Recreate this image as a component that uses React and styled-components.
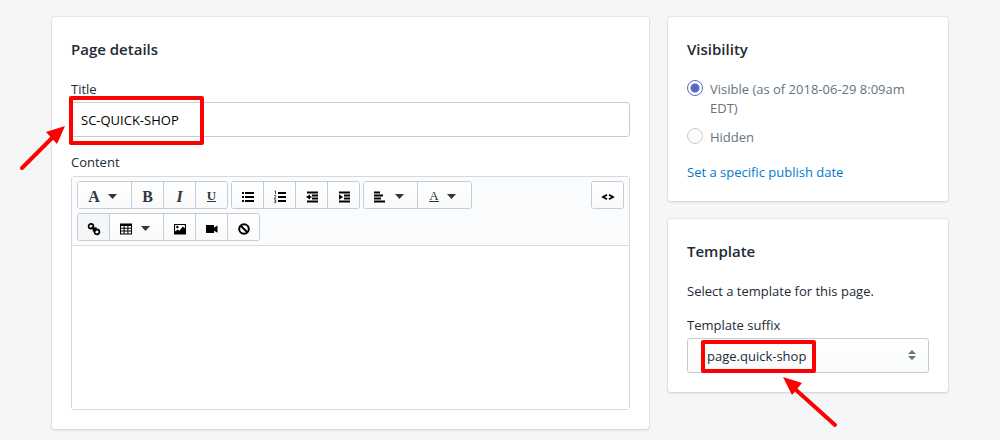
import React, { useState } from 'react';
import styled, { createGlobalStyle } from 'styled-components';

const GlobalStyle = createGlobalStyle`
  *, *::before, *::after {
    box-sizing: border-box;
  }

  body {
    margin: 0;
    background: #f4f6f8;
    color: #212b36;
    font-family: "Open Sans", "Noto Sans", sans-serif;
    font-size: 13px;
    line-height: 20px;
  }

  button, input, select, textarea {
    font: inherit;
    color: inherit;
  }
`;

const Page = styled.main`
  display: grid;
  grid-template-columns: minmax(0, 1fr) 280px;
  align-items: start;
  gap: 19px;
  padding: 17px 52px 10px;
`;

const Sidebar = styled.div`
  display: grid;
  gap: 18px;
`;

const Card = styled.section`
  padding: 20px 19px 19px;
  background: #fff;
  border-radius: 3px;
  box-shadow: 0 0 0 1px rgba(63, 63, 68, 0.06), 0 1px 3px rgba(63, 63, 68, 0.16);
`;

const Heading = styled.h2`
  margin: 0 0 18px;
  font-size: 15px;
  font-weight: 600;
  line-height: 24px;
`;

const Label = styled.label`
  display: block;
  margin-bottom: 3px;
`;

const Field = styled.div`
  position: relative;
  margin-bottom: 15px;
`;

const TextInput = styled.input`
  display: block;
  width: 100%;
  height: 35px;
  padding: 0 9px;
  color: #000;
  background: #fff;
  border: 1px solid #c4cdd5;
  border-radius: 3px;
`;

const Editor = styled.div`
  margin-top: 4px;
  border: 1px solid #d3dbe2;
  border-radius: 3px;
`;

const Toolbar = styled.div`
  display: flex;
  justify-content: space-between;
  align-items: flex-start;
  padding: 4px 5px;
  background: #fafbfc;
  border-bottom: 1px solid #d9dcdf;
`;

const Groups = styled.div`
  display: grid;
  gap: 4px;
`;

const GroupRow = styled.div`
  display: flex;
  gap: 3px;
`;

const Group = styled.div`
  display: flex;
  height: 28px;
  border: 1px solid #c4cdd5;
  border-radius: 3px;
  overflow: hidden;
`;

const ToolButton = styled.button`
  display: flex;
  align-items: center;
  justify-content: center;
  gap: 8px;
  width: ${({ $menu }) => ($menu ? '54px' : '32px')};
  padding: ${({ $menu }) => ($menu ? '3px 4px 0 0' : '3px 0 0')};
  border: 0;
  border-right: 1px solid #c4cdd5;
  background: ${({ $muted }) => ($muted ? '#f4f6f8' : 'linear-gradient(#fff, #f9fafb)')};
  color: #000;
  cursor: pointer;

  &:last-child {
    width: ${({ $menu }) => ($menu ? '53px' : '31px')};
    border-right: 0;
  }
`;

const Letter = styled.span`
  color: #31373d;
  font-family: "Liberation Serif", serif;
  font-size: ${({ $small }) => ($small ? '13px' : '16px')};
  font-weight: ${({ $light }) => ($light ? 400 : 700)};
  font-style: ${({ $italic }) => ($italic ? 'italic' : 'normal')};
  line-height: 16px;
`;

const Underlined = styled(Letter)`
  font-size: 13px;
  line-height: 10px;
  border-bottom: 1px solid;
`;

const Icon = styled.svg`
  display: block;
  width: 14px;
  height: 14px;
  fill: currentColor;
`;

const CaretIcon = styled.svg`
  width: 9px;
  height: 5px;
  fill: #31373d;
`;

const Body = styled.textarea`
  display: block;
  width: 100%;
  height: 163px;
  padding: 10px;
  border: 0;
  background: #fff;
  resize: none;
`;

const Choices = styled.div`
  padding-top: 1px;
`;

const Choice = styled.label`
  display: flex;
  gap: 7px;
  margin-bottom: 10px;
  color: #637381;
  line-height: 19px;
`;

const Radio = styled.input`
  appearance: none;
  flex: none;
  width: 16px;
  height: 16px;
  margin: 0;
  border: 1px solid #c4cdd5;
  border-radius: 50%;
  background: linear-gradient(#fff, #f9fafb);

  &:checked {
    border-color: #5c6ac4;
    background: radial-gradient(circle, #5c6ac4 4px, #fff 5px);
  }
`;

const Link = styled.a`
  display: inline-block;
  margin-top: 5px;
  color: #007ace;
  text-decoration: none;
`;

const Text = styled.p`
  margin: 0 0 14px;
`;

const SelectField = styled.div`
  position: relative;
`;

const Select = styled.select`
  appearance: none;
  display: block;
  width: 100%;
  height: 35px;
  padding: 0 30px 0 19px;
  border: 1px solid #c4cdd5;
  border-radius: 3px;
  background: linear-gradient(#fff, #f9fafb);
`;

const SelectArrows = styled.svg`
  position: absolute;
  right: 13px;
  top: 12px;
  width: 8px;
  height: 10px;
  fill: #637381;
  pointer-events: none;
`;

const Marker = styled.div`
  position: absolute;
  left: ${({ $left }) => $left}px;
  top: ${({ $top }) => $top}px;
  width: ${({ $width }) => $width}px;
  height: ${({ $height }) => $height}px;
  border: 4px solid #f00;
  border-radius: 2px;
  pointer-events: none;
`;

const Arrow = styled.svg`
  position: absolute;
  left: ${({ $left }) => $left}px;
  top: ${({ $top }) => $top}px;
  fill: #f00;
  stroke: #f00;
  pointer-events: none;
`;

const Caret = () => (
  <CaretIcon viewBox="0 0 9 5">
    <path d="M0 0h9L4.5 5z" />
  </CaretIcon>
);

const icons = {
  bullets: <path d="M1 2h2v2H1zM1 6h2v2H1zM1 10h2v2H1zM4 2h9v2H4zM4 6h9v2H4zM4 10h9v2H4z" />,
  numbers: (
    <g>
      <path d="M5 2h8v2H5zM5 6h8v2H5zM5 10h8v2H5z" />
      <path
        d="M1.5 1h1v3M1.2 5.5h1.4v1.2L1.3 8.4h1.6M1.2 9.8h1.5v2.9H1.2M1.6 11.2h1"
        fill="none"
        stroke="currentColor"
        strokeWidth="0.7"
      />
    </g>
  ),
  outdent: <path d="M2 1.5h11v2H2zM7 4.5h6v2H7zM7 7.5h6v2H7zM2 10.5h11v2H2zM1 7l4-2.5v1.7h1.5v1.6H5v1.7z" />,
  indent: <path d="M2 1.5h11v2H2zM7 4.5h6v2H7zM7 7.5h6v2H7zM2 10.5h11v2H2zM6 7L2 4.3v5.4z" />,
  align: <path d="M1 1.5h6v2H1zM1 4.5h9v2H1zM1 7.5h7v2H1zM1 10.5h11v2H1z" />,
  link: (
    <g fill="none" stroke="currentColor" strokeWidth="1.7">
      <circle cx="4" cy="4.2" r="2.4" />
      <circle cx="9.9" cy="9.8" r="2.5" />
      <path d="M4.6 5l4.6 4M6.6 9.4c-.9-2.2 1-3.9 3-3.1" />
    </g>
  ),
  table: (
    <path fillRule="evenodd" d="M1 1.5h12v11H1zM2 4v1.8h2.6V4zM5.6 4v1.8h2.8V4zM9.4 4v1.8H12V4zM2 6.8v1.8h2.6V6.8zM5.6 6.8v1.8h2.8V6.8zM9.4 6.8v1.8H12V6.8zM2 9.6v1.9h2.6V9.6zM5.6 9.6v1.9h2.8V9.6zM9.4 9.6v1.9H12V9.6z" />
  ),
  image: (
    <path fillRule="evenodd" d="M1 2h12v10.5H1zM2.1 3.1v6.4l2.6-2 1.7 1.3L9.8 4.6l2.1 2V3.1zM3.2 5a1.2 1.2 0 1 0 2.4 0 1.2 1.2 0 1 0-2.4 0z" />
  ),
  video: <path d="M1 3h8v2.6l1.2-.8L12.5 3.4v7.4L9 8.8V11H1z" />,
  clear: (
    <g fill="none" stroke="currentColor" strokeWidth="2">
      <circle cx="7" cy="7" r="4.8" />
      <path d="M3.7 3.7l6.6 6.6" />
    </g>
  ),
  code: (
    <path d="M6 4.7L2 7l4 2.3M8 4.7L12 7 8 9.3" fill="none" stroke="currentColor" strokeWidth="1.8" />
  ),
};

const Tool = ({ icon, label, menu, muted, children }) => (
  <ToolButton type="button" aria-label={label} $menu={menu} $muted={muted}>
    {icon ? <Icon viewBox="0 0 14 14">{icons[icon]}</Icon> : children}
    {menu && <Caret />}
  </ToolButton>
);

const RichTextEditor = () => (
  <Editor>
    <Toolbar>
      <Groups>
        <GroupRow>
          <Group>
            <Tool label="Formatting" menu><Letter>A</Letter></Tool>
            <Tool label="Bold"><Letter>B</Letter></Tool>
            <Tool label="Italic"><Letter $italic>I</Letter></Tool>
            <Tool label="Underline"><Underlined>U</Underlined></Tool>
          </Group>
          <Group>
            <Tool label="Bulleted list" icon="bullets" />
            <Tool label="Numbered list" icon="numbers" />
            <Tool label="Outdent" icon="outdent" />
            <Tool label="Indent" icon="indent" />
          </Group>
          <Group>
            <Tool label="Alignment" icon="align" menu />
            <Tool label="Color" menu><Underlined $light>A</Underlined></Tool>
          </Group>
        </GroupRow>
        <GroupRow>
          <Group>
            <Tool label="Insert link" icon="link" muted />
            <Tool label="Insert table" icon="table" menu />
            <Tool label="Insert image" icon="image" />
            <Tool label="Insert video" icon="video" />
            <Tool label="Clear formatting" icon="clear" />
          </Group>
        </GroupRow>
      </Groups>
      <Group>
        <Tool label="Show HTML" icon="code" />
      </Group>
    </Toolbar>
    <Body id="content" />
  </Editor>
);

const PageDetails = () => {
  const [title, setTitle] = useState('SC-QUICK-SHOP');

  return (
    <Card>
      <Heading>Page details</Heading>
      <Field>
        <Label htmlFor="title">Title</Label>
        <TextInput id="title" value={title} onChange={(e) => setTitle(e.target.value)} />
        <Marker $left={-2} $top={17} $width={135} $height={49} />
        <Arrow $left={-52} $top={44} width="48" height="48" viewBox="0 0 48 48">
          <path d="M3 45L34 14" strokeWidth="4" strokeLinecap="round" />
          <path d="M46 3L27 9l11 12z" stroke="none" />
        </Arrow>
      </Field>
      <Label htmlFor="content">Content</Label>
      <RichTextEditor />
    </Card>
  );
};

const Visibility = () => {
  const [status, setStatus] = useState('visible');
  const onChange = (e) => setStatus(e.target.value);

  return (
    <Card>
      <Heading>Visibility</Heading>
      <Choices>
        <Choice>
          <Radio type="radio" name="status" value="visible" checked={status === 'visible'} onChange={onChange} />
          <span>Visible (as of 2018-06-29 8:09am EDT)</span>
        </Choice>
        <Choice>
          <Radio type="radio" name="status" value="hidden" checked={status === 'hidden'} onChange={onChange} />
          <span>Hidden</span>
        </Choice>
      </Choices>
      <Link href="#publish-date">Set a specific publish date</Link>
    </Card>
  );
};

const Template = () => (
  <Card>
    <Heading>Template</Heading>
    <Text>Select a template for this page.</Text>
    <Label htmlFor="template">Template suffix</Label>
    <SelectField>
      <Select id="template" defaultValue="page.quick-shop">
        <option>page.quick-shop</option>
      </Select>
      <SelectArrows viewBox="0 0 8 10">
        <path d="M0 4l4-4 4 4zM0 6h8l-4 4z" />
      </SelectArrows>
      <Marker $left={14} $top={2} $width={115} $height={33} />
      <Arrow $left={94} $top={37} width="58" height="54" viewBox="0 0 58 54">
        <path d="M54 50L14 14" strokeWidth="4" strokeLinecap="round" />
        <path d="M2 2l19 6-10 12z" stroke="none" />
      </Arrow>
    </SelectField>
  </Card>
);

const App = () => (
  <>
    <GlobalStyle />
    <Page>
      <PageDetails />
      <Sidebar>
        <Visibility />
        <Template />
      </Sidebar>
    </Page>
  </>
);

export default App;
